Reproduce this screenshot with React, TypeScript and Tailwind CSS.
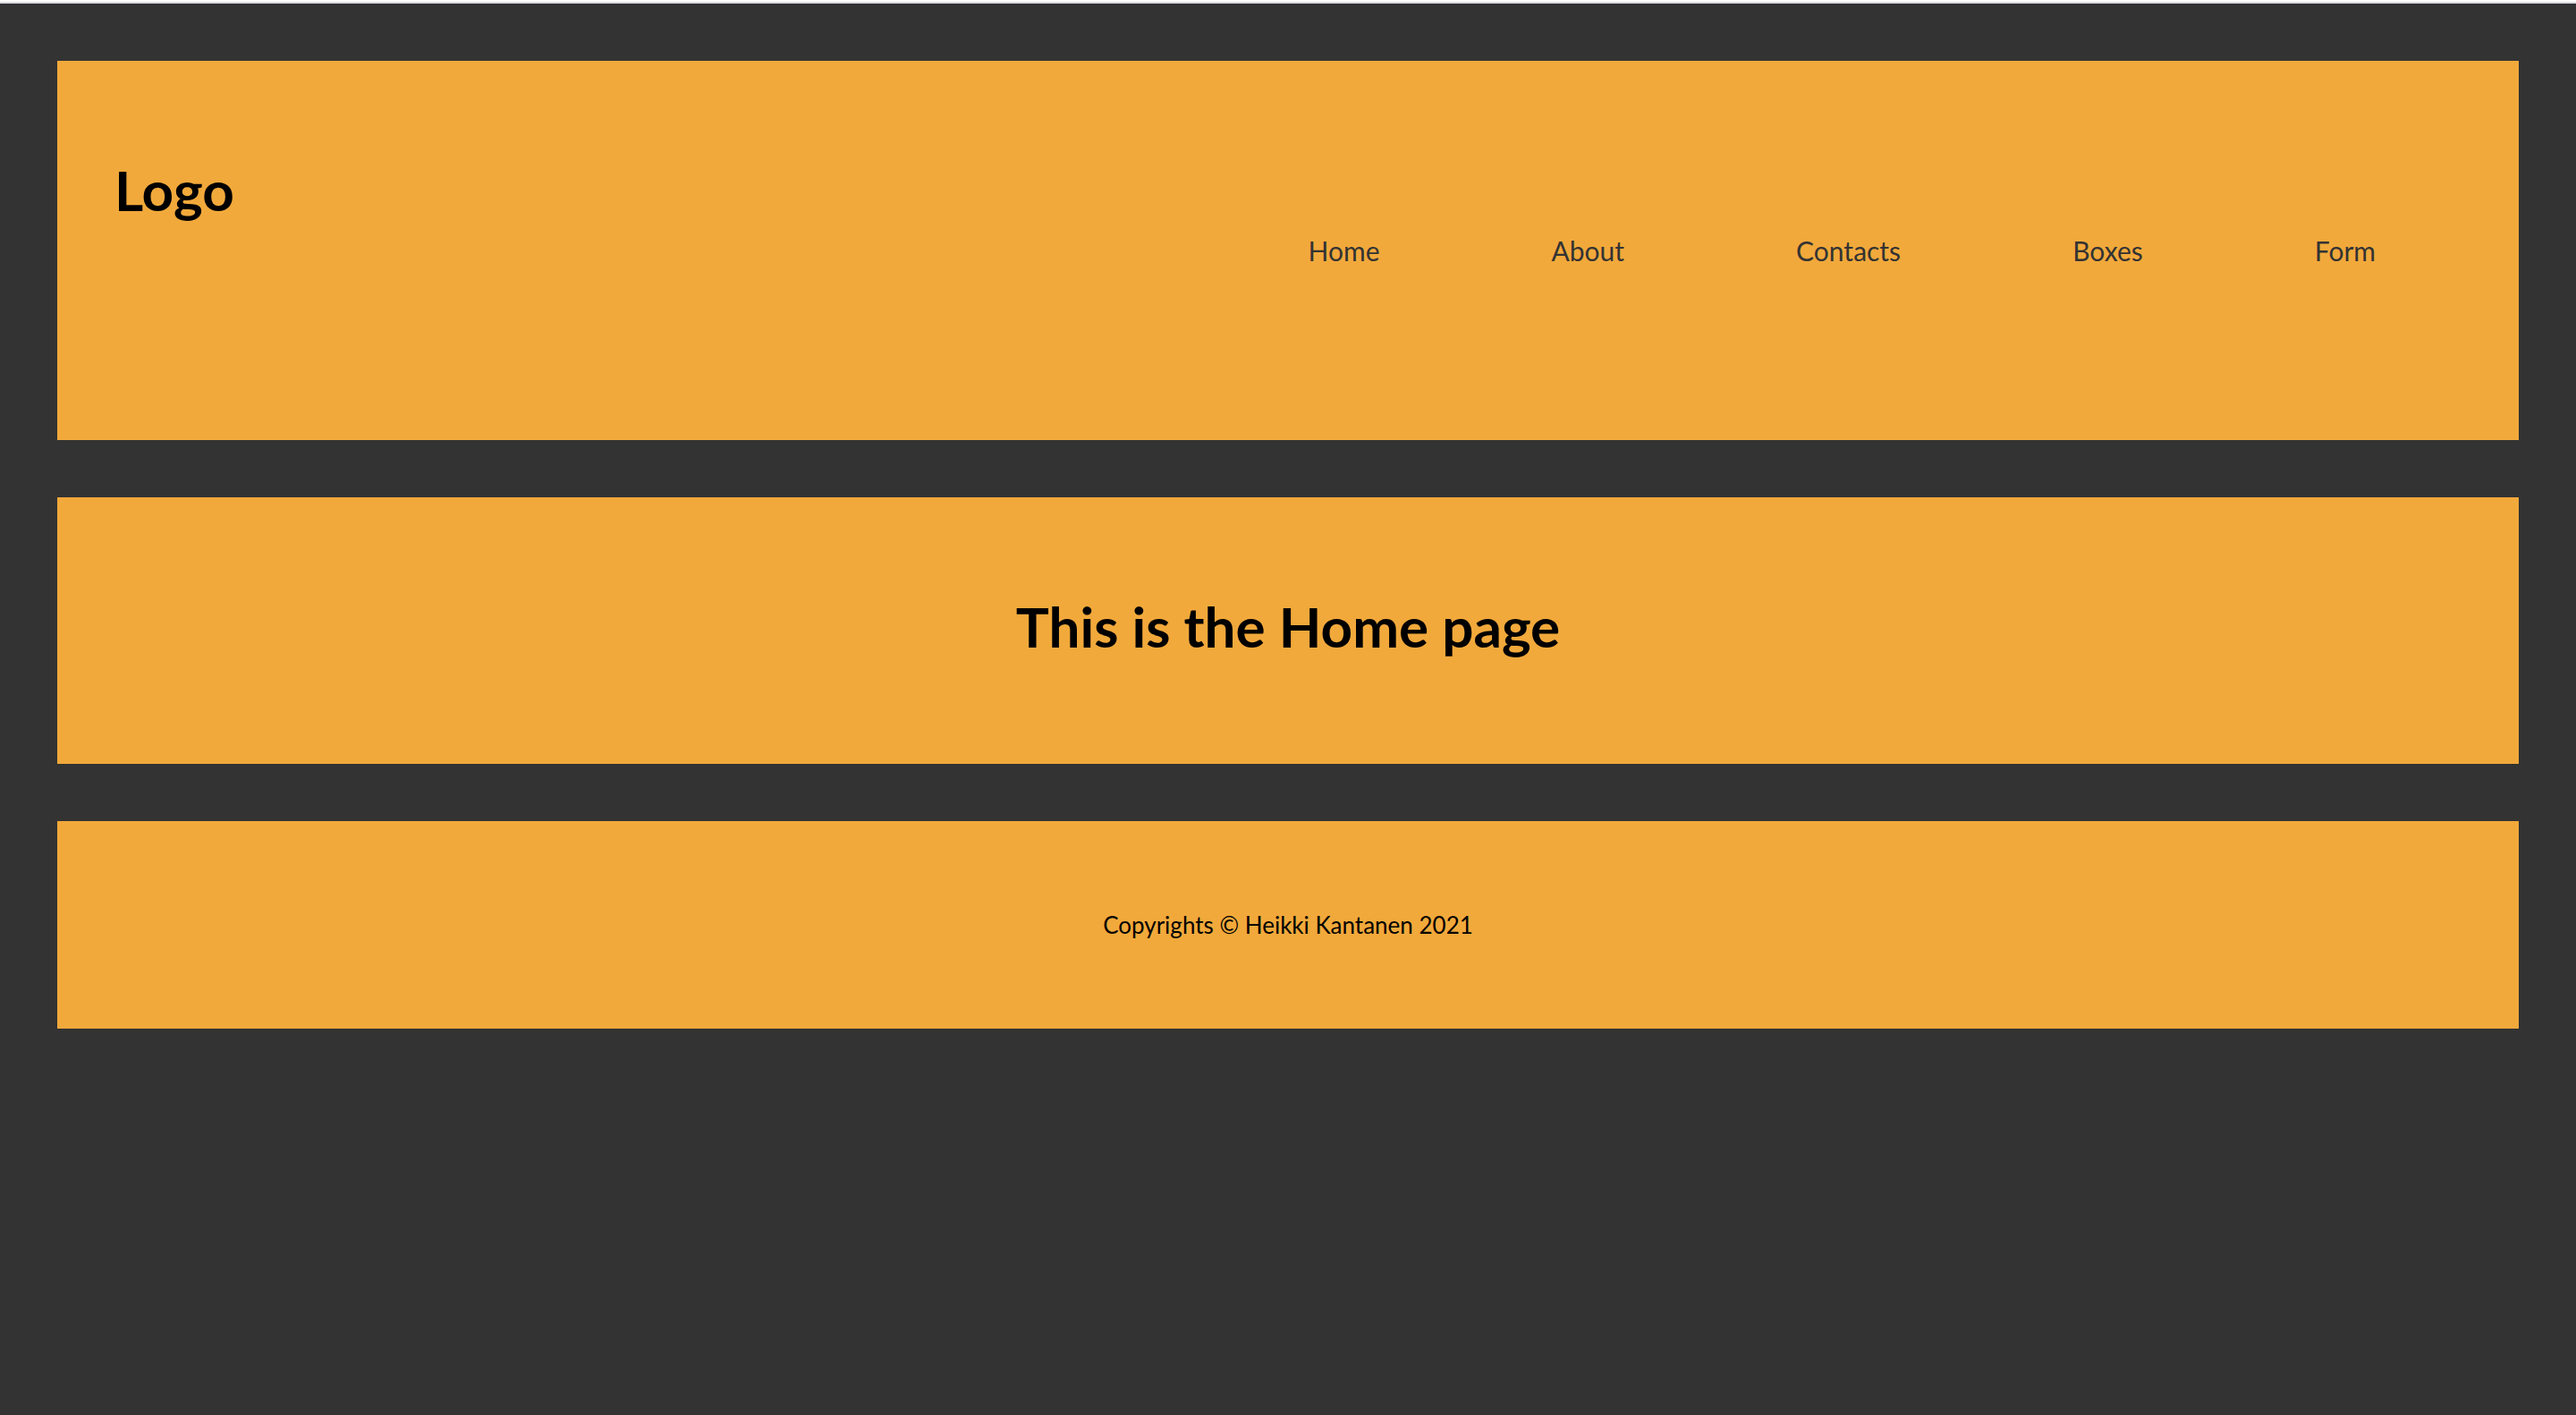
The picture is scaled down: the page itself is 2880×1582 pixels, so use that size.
const links = ["Home", "About", "Contacts", "Boxes", "Form"];

export default function App() {
  return (
    <div className="min-h-screen border-t-2 border-white bg-[#333333] font-['Lato','Open_Sans',sans-serif] text-black">
      <div className="flex flex-col gap-16 border-t-2 border-[#dcdce2] p-16">
        <header className="flex items-start justify-between bg-[#f2a93b] px-16 pt-26 pb-48">
          <h1 className="text-[62px] leading-20 font-bold">Logo</h1>
          <nav className="pt-22 pr-24">
            <ul className="flex gap-48 text-[30px] leading-10 text-[#333333]">
              {links.map((l) => (
                <li key={l}>
                  <a href="#">{l}</a>
                </li>
              ))}
            </ul>
          </nav>
        </header>
        <main className="bg-[#f2a93b] pt-26 pb-[114px] text-center">
          <h2 className="text-[62px] leading-20 font-bold">This is the Home page</h2>
        </main>
        <footer className="bg-[#f2a93b] py-24 text-center">
          <p className="text-[26px] leading-10">Copyrights © Heikki Kantanen 2021</p>
        </footer>
      </div>
    </div>
  );
}
